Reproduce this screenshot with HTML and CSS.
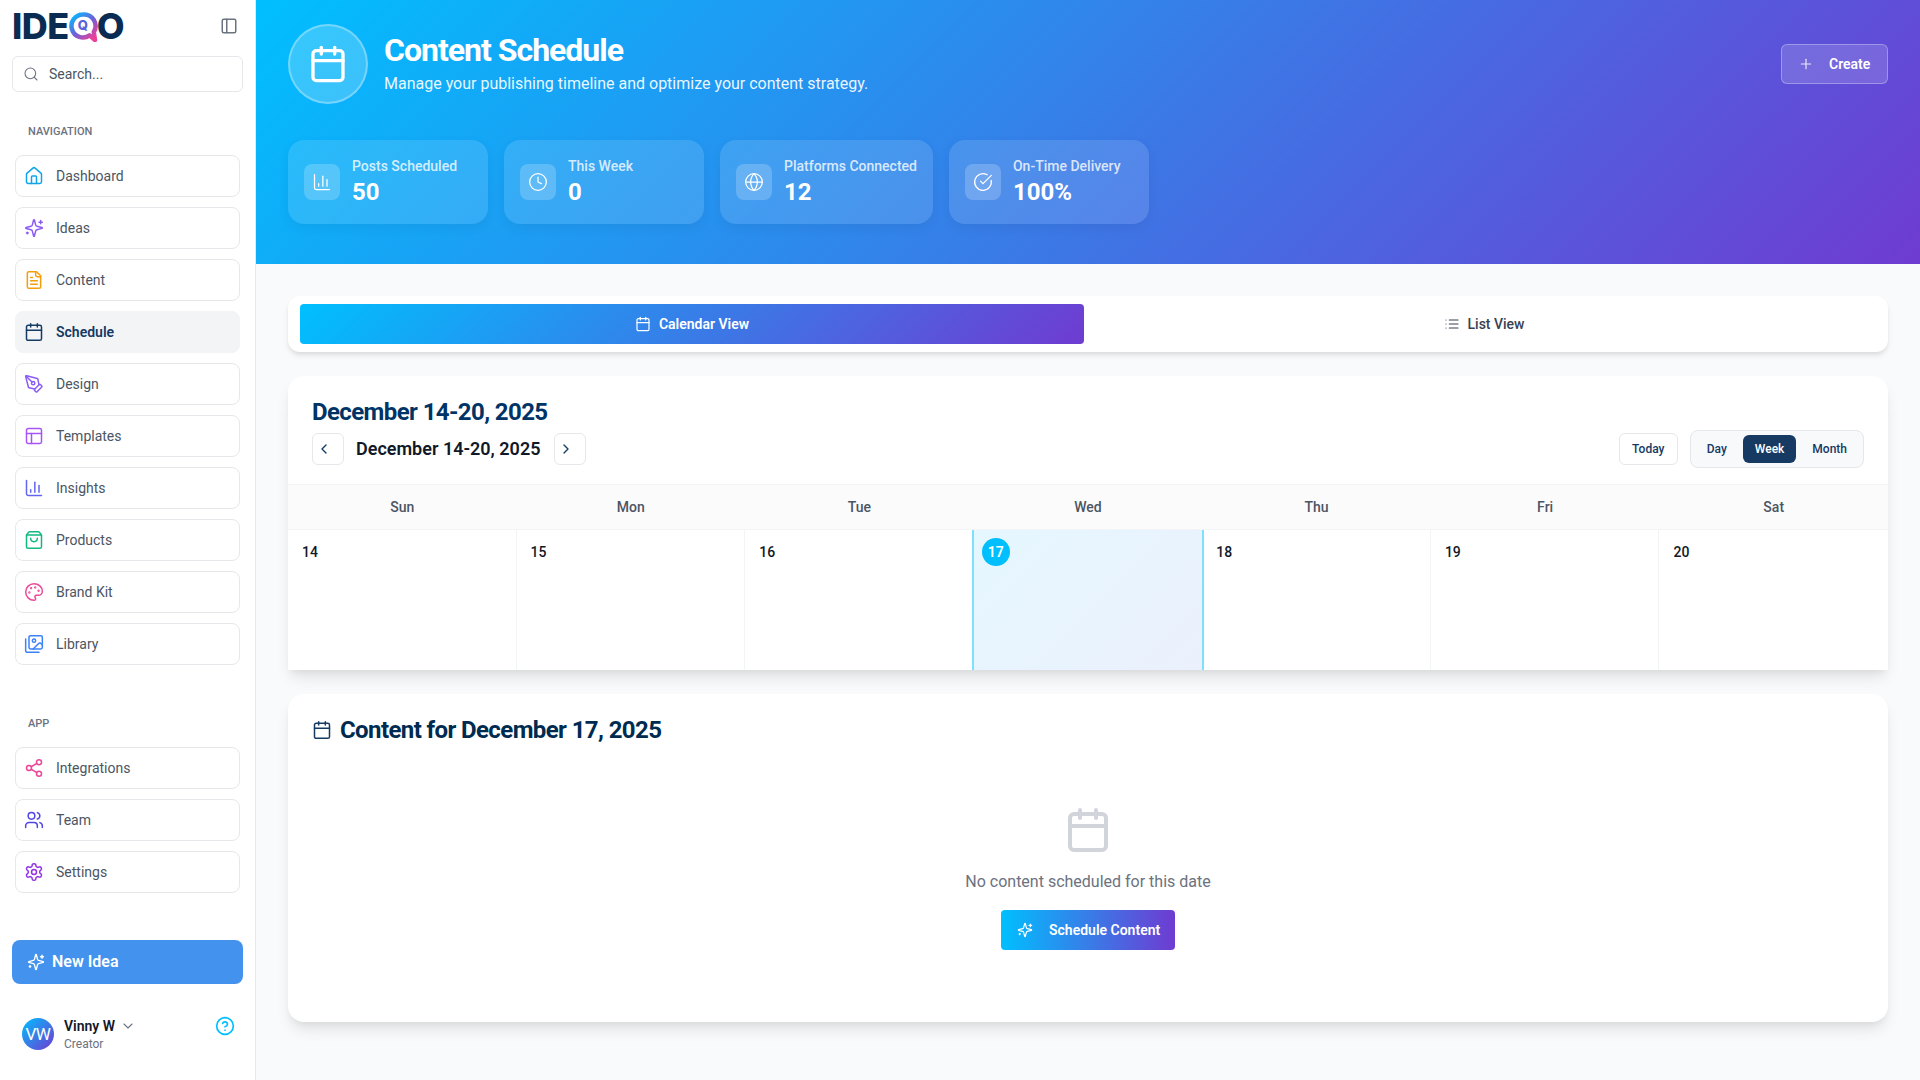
FILE: index.html
```html
<!DOCTYPE html>
<html lang="en">
<head>
    <meta charset="UTF-8">
    <meta name="viewport" content="width=device-width, initial-scale=1.0">
    <title>Content Schedule</title>
    <link rel="stylesheet" href="styles.css">
</head>
<body>
    <!-- icon sprite -->
    <svg class="sprite" xmlns="http://www.w3.org/2000/svg">
        <symbol id="i-panel" viewBox="0 0 24 24"><rect x="3" y="3" width="18" height="18" rx="2"/><path d="M9 3v18"/></symbol>
        <symbol id="i-search" viewBox="0 0 24 24"><circle cx="11" cy="11" r="8"/><path d="m21 21-4.3-4.3"/></symbol>
        <symbol id="i-home" viewBox="0 0 24 24"><path d="M15 21v-8a1 1 0 0 0-1-1h-4a1 1 0 0 0-1 1v8"/><path d="M3 10a2 2 0 0 1 .709-1.528l7-5.999a2 2 0 0 1 2.582 0l7 5.999A2 2 0 0 1 21 10v9a2 2 0 0 1-2 2H5a2 2 0 0 1-2-2z"/></symbol>
        <symbol id="i-sparkles" viewBox="0 0 24 24"><path d="M9.937 15.5A2 2 0 0 0 8.5 14.063l-6.135-1.582a.5.5 0 0 1 0-.962L8.5 9.936A2 2 0 0 0 9.937 8.5l1.582-6.135a.5.5 0 0 1 .963 0L14.063 8.5A2 2 0 0 0 15.5 9.937l6.135 1.581a.5.5 0 0 1 0 .964L15.5 14.063a2 2 0 0 0-1.437 1.437l-1.582 6.135a.5.5 0 0 1-.963 0z"/><path d="M20 3v4"/><path d="M22 5h-4"/><path d="M4 17v2"/><path d="M5 18H3"/></symbol>
        <symbol id="i-file" viewBox="0 0 24 24"><path d="M15 2H6a2 2 0 0 0-2 2v16a2 2 0 0 0 2 2h12a2 2 0 0 0 2-2V7Z"/><path d="M14 2v4a2 2 0 0 0 2 2h4"/><path d="M10 9H8"/><path d="M16 13H8"/><path d="M16 17H8"/></symbol>
        <symbol id="i-calendar" viewBox="0 0 24 24"><path d="M8 2v4"/><path d="M16 2v4"/><rect x="3" y="4" width="18" height="18" rx="2"/><path d="M3 10h18"/></symbol>
        <symbol id="i-pen" viewBox="0 0 24 24"><path d="M15.707 21.293a1 1 0 0 1-1.414 0l-1.586-1.586a1 1 0 0 1 0-1.414l5.586-5.586a1 1 0 0 1 1.414 0l1.586 1.586a1 1 0 0 1 0 1.414z"/><path d="m18 13-1.375-6.874a1 1 0 0 0-.746-.776L3.235 2.028a1 1 0 0 0-1.207 1.207L5.35 15.879a1 1 0 0 0 .776.746L13 18"/><path d="m2.3 2.3 7.286 7.286"/><circle cx="11" cy="11" r="2"/></symbol>
        <symbol id="i-layout" viewBox="0 0 24 24"><rect x="3" y="3" width="18" height="18" rx="2"/><path d="M3 9h18"/><path d="M9 21V9"/></symbol>
        <symbol id="i-chart" viewBox="0 0 24 24"><path d="M3 3v16a2 2 0 0 0 2 2h16"/><path d="M18 17V9"/><path d="M13 17V5"/><path d="M8 17v-3"/></symbol>
        <symbol id="i-bag" viewBox="0 0 24 24"><path d="M16 10a4 4 0 0 1-8 0"/><path d="M3.103 6.034h17.794"/><path d="M3.4 5.467a2 2 0 0 0-.4 1.2V20a2 2 0 0 0 2 2h14a2 2 0 0 0 2-2V6.667a2 2 0 0 0-.4-1.2l-2-2.667A2 2 0 0 0 17 2H7a2 2 0 0 0-1.6.8z"/></symbol>
        <symbol id="i-palette" viewBox="0 0 24 24"><path d="M12 22a1 1 0 0 1 0-20 10 9 0 0 1 10 9 5 5 0 0 1-5 5h-2.25a1.75 1.75 0 0 0-1.4 2.8l.3.4a1.75 1.75 0 0 1-1.4 2.8z"/><circle cx="13.5" cy="6.5" r=".5" fill="currentColor"/><circle cx="17.5" cy="10.5" r=".5" fill="currentColor"/><circle cx="6.5" cy="12.5" r=".5" fill="currentColor"/><circle cx="8.5" cy="7.5" r=".5" fill="currentColor"/></symbol>
        <symbol id="i-images" viewBox="0 0 24 24"><path d="M18 22H4a2 2 0 0 1-2-2V6"/><path d="m22 13-1.296-1.296a2.41 2.41 0 0 0-3.408 0L11 18"/><circle cx="12" cy="8" r="2"/><rect x="6" y="2" width="16" height="16" rx="2"/></symbol>
        <symbol id="i-share" viewBox="0 0 24 24"><circle cx="18" cy="5" r="3"/><circle cx="6" cy="12" r="3"/><circle cx="18" cy="19" r="3"/><path d="m8.59 13.51 6.83 3.98"/><path d="m15.41 6.51-6.82 3.98"/></symbol>
        <symbol id="i-users" viewBox="0 0 24 24"><path d="M16 21v-2a4 4 0 0 0-4-4H6a4 4 0 0 0-4 4v2"/><circle cx="9" cy="7" r="4"/><path d="M22 21v-2a4 4 0 0 0-3-3.87"/><path d="M16 3.13a4 4 0 0 1 0 7.75"/></symbol>
        <symbol id="i-gear" viewBox="0 0 24 24"><path d="M12.22 2h-.44a2 2 0 0 0-2 2v.18a2 2 0 0 1-1 1.73l-.43.25a2 2 0 0 1-2 0l-.15-.08a2 2 0 0 0-2.73.73l-.22.38a2 2 0 0 0 .73 2.73l.15.1a2 2 0 0 1 1 1.72v.51a2 2 0 0 1-1 1.74l-.15.09a2 2 0 0 0-.73 2.73l.22.38a2 2 0 0 0 2.73.73l.15-.08a2 2 0 0 1 2 0l.43.25a2 2 0 0 1 1 1.73V20a2 2 0 0 0 2 2h.44a2 2 0 0 0 2-2v-.18a2 2 0 0 1 1-1.73l.43-.25a2 2 0 0 1 2 0l.15.08a2 2 0 0 0 2.73-.73l.22-.39a2 2 0 0 0-.73-2.73l-.15-.08a2 2 0 0 1-1-1.74v-.5a2 2 0 0 1 1-1.74l.15-.09a2 2 0 0 0 .73-2.73l-.22-.38a2 2 0 0 0-2.73-.73l-.15.08a2 2 0 0 1-2 0l-.43-.25a2 2 0 0 1-1-1.73V4a2 2 0 0 0-2-2z"/><circle cx="12" cy="12" r="3"/></symbol>
        <symbol id="i-help" viewBox="0 0 24 24"><circle cx="12" cy="12" r="10"/><path d="M9.09 9a3 3 0 0 1 5.83 1c0 2-3 3-3 3"/><path d="M12 17h.01"/></symbol>
        <symbol id="i-down" viewBox="0 0 24 24"><path d="m6 9 6 6 6-6"/></symbol>
        <symbol id="i-left" viewBox="0 0 24 24"><path d="m15 18-6-6 6-6"/></symbol>
        <symbol id="i-right" viewBox="0 0 24 24"><path d="m9 18 6-6-6-6"/></symbol>
        <symbol id="i-plus" viewBox="0 0 24 24"><path d="M5 12h14"/><path d="M12 5v14"/></symbol>
        <symbol id="i-clock" viewBox="0 0 24 24"><circle cx="12" cy="12" r="10"/><path d="M12 6v6l4 2"/></symbol>
        <symbol id="i-globe" viewBox="0 0 24 24"><circle cx="12" cy="12" r="10"/><path d="M12 2a14.5 14.5 0 0 0 0 20 14.5 14.5 0 0 0 0-20"/><path d="M2 12h20"/></symbol>
        <symbol id="i-check" viewBox="0 0 24 24"><path d="M21.801 10A10 10 0 1 1 17 3.335"/><path d="m9 11 3 3L22 4"/></symbol>
        <symbol id="i-list" viewBox="0 0 24 24"><path d="M3 12h.01"/><path d="M3 18h.01"/><path d="M3 6h.01"/><path d="M8 12h13"/><path d="M8 18h13"/><path d="M8 6h13"/></symbol>
    </svg>

    <div class="app">
        <aside class="sidebar">
            <div class="brand">
                <div class="logo">
                    <span>IDE</span>
                    <span class="logo-q">
                        <svg class="logo-ring" viewBox="0 0 30 30" fill="none">
                            <defs>
                                <linearGradient id="ringGrad" x1="0" y1="0" x2="0.8" y2="1">
                                    <stop offset="0" stop-color="#00bfff"/>
                                    <stop offset="0.55" stop-color="#6f5fd8"/>
                                    <stop offset="1" stop-color="#ec3f9a"/>
                                </linearGradient>
                            </defs>
                            <path d="M14 2.5a11.5 11.5 0 1 0 6.6 20.9l5.4 4.6-1.2-8A11.5 11.5 0 0 0 14 2.5z" stroke="url(#ringGrad)" stroke-width="4.5" stroke-linejoin="round"/>
                        </svg>
                        <span class="logo-q-inner">Q</span>
                    </span>
                    <span>O</span>
                </div>
                <svg class="icon toggle"><use href="#i-panel"/></svg>
            </div>

            <div class="search">
                <svg class="icon search-icon"><use href="#i-search"/></svg>
                <span>Search...</span>
            </div>

            <div class="nav-title">Navigation</div>
            <nav class="nav">
                <a class="nav-item"><svg class="icon c-sky"><use href="#i-home"/></svg>Dashboard</a>
                <a class="nav-item"><svg class="icon c-violet"><use href="#i-sparkles"/></svg>Ideas</a>
                <a class="nav-item"><svg class="icon c-amber"><use href="#i-file"/></svg>Content</a>
                <a class="nav-item active"><svg class="icon"><use href="#i-calendar"/></svg>Schedule</a>
                <a class="nav-item"><svg class="icon c-violet"><use href="#i-pen"/></svg>Design</a>
                <a class="nav-item"><svg class="icon c-purple"><use href="#i-layout"/></svg>Templates</a>
                <a class="nav-item"><svg class="icon c-indigo"><use href="#i-chart"/></svg>Insights</a>
                <a class="nav-item"><svg class="icon c-green"><use href="#i-bag"/></svg>Products</a>
                <a class="nav-item"><svg class="icon c-pink"><use href="#i-palette"/></svg>Brand Kit</a>
                <a class="nav-item"><svg class="icon c-blue"><use href="#i-images"/></svg>Library</a>
            </nav>

            <div class="nav-title app-title">App</div>
            <nav class="nav">
                <a class="nav-item"><svg class="icon c-pink"><use href="#i-share"/></svg>Integrations</a>
                <a class="nav-item"><svg class="icon c-deep"><use href="#i-users"/></svg>Team</a>
                <a class="nav-item"><svg class="icon c-grape"><use href="#i-gear"/></svg>Settings</a>
            </nav>

            <button class="new-idea"><svg class="icon"><use href="#i-sparkles"/></svg>New Idea</button>

            <div class="user">
                <div class="avatar">VW</div>
                <div class="user-info">
                    <div class="user-name">Vinny W <svg class="icon"><use href="#i-down"/></svg></div>
                    <div class="user-role">Creator</div>
                </div>
                <svg class="icon help"><use href="#i-help"/></svg>
            </div>
        </aside>

        <main class="main">
            <header class="hero">
                <div class="hero-top">
                    <div class="hero-circle"><svg class="icon"><use href="#i-calendar"/></svg></div>
                    <div class="hero-text">
                        <h1>Content Schedule</h1>
                        <p>Manage your publishing timeline and optimize your content strategy.</p>
                    </div>
                    <button class="create"><svg class="icon"><use href="#i-plus"/></svg>Create</button>
                </div>
                <div class="stats">
                    <div class="stat">
                        <div class="stat-icon"><svg class="icon"><use href="#i-chart"/></svg></div>
                        <div><div class="stat-label">Posts Scheduled</div><div class="stat-value">50</div></div>
                    </div>
                    <div class="stat">
                        <div class="stat-icon"><svg class="icon"><use href="#i-clock"/></svg></div>
                        <div><div class="stat-label">This Week</div><div class="stat-value">0</div></div>
                    </div>
                    <div class="stat">
                        <div class="stat-icon"><svg class="icon"><use href="#i-globe"/></svg></div>
                        <div><div class="stat-label">Platforms Connected</div><div class="stat-value">12</div></div>
                    </div>
                    <div class="stat">
                        <div class="stat-icon"><svg class="icon"><use href="#i-check"/></svg></div>
                        <div><div class="stat-label">On-Time Delivery</div><div class="stat-value">100%</div></div>
                    </div>
                </div>
            </header>

            <div class="content">
                <div class="tabs">
                    <button class="tab active"><svg class="icon"><use href="#i-calendar"/></svg>Calendar View</button>
                    <button class="tab"><svg class="icon"><use href="#i-list"/></svg>List View</button>
                </div>

                <section class="card calendar">
                    <div class="cal-head">
                        <div>
                            <h2 class="cal-title">December 14-20, 2025</h2>
                            <div class="cal-nav">
                                <button class="nav-btn"><svg class="icon"><use href="#i-left"/></svg></button>
                                <span class="cal-range">December 14-20, 2025</span>
                                <button class="nav-btn"><svg class="icon"><use href="#i-right"/></svg></button>
                            </div>
                        </div>
                        <div class="cal-controls">
                            <button class="today">Today</button>
                            <div class="segment">
                                <button>Day</button>
                                <button class="active">Week</button>
                                <button>Month</button>
                            </div>
                        </div>
                    </div>
                    <div class="week-head">
                        <div>Sun</div><div>Mon</div><div>Tue</div><div>Wed</div><div>Thu</div><div>Fri</div><div>Sat</div>
                    </div>
                    <div class="week">
                        <div class="day"><span class="num">14</span></div>
                        <div class="day"><span class="num">15</span></div>
                        <div class="day"><span class="num">16</span></div>
                        <div class="day today-cell"><span class="num">17</span></div>
                        <div class="day"><span class="num">18</span></div>
                        <div class="day"><span class="num">19</span></div>
                        <div class="day"><span class="num">20</span></div>
                    </div>
                </section>

                <section class="card day-content">
                    <h2 class="day-title"><svg class="icon"><use href="#i-calendar"/></svg>Content for December 17, 2025</h2>
                    <div class="empty">
                        <svg class="icon empty-icon"><use href="#i-calendar"/></svg>
                        <p>No content scheduled for this date</p>
                        <button class="schedule-btn"><svg class="icon"><use href="#i-sparkles"/></svg>Schedule Content</button>
                    </div>
                </section>
            </div>
        </main>
    </div>
</body>
</html>
```

FILE: styles.css
```css
* { margin: 0; padding: 0; box-sizing: border-box; }
body { font-family: Roboto, "Liberation Sans", sans-serif; background: #f9fafb; color: #111827; font-size: 14px; }
button { font-family: inherit; border: none; background: none; cursor: pointer; }
.sprite { display: none; }
.icon { width: 20px; height: 20px; fill: none; stroke: currentColor; stroke-width: 2; stroke-linecap: round; stroke-linejoin: round; flex-shrink: 0; }

.app { display: flex; height: 1080px; overflow: hidden; }

/* sidebar */
.sidebar { width: 256px; flex-shrink: 0; background: #fff; border-right: 1px solid #e5e7eb; padding: 12px; display: flex; flex-direction: column; }
.brand { height: 28px; display: flex; align-items: center; justify-content: space-between; }
.logo { display: flex; align-items: center; font-family: Inter, sans-serif; font-weight: 800; font-size: 36px; line-height: 28px; color: #0a2c52; letter-spacing: -0.5px; }
.logo-q { width: 28px; height: 28px; margin-left: 0; position: relative; display: flex; align-items: center; justify-content: center; }
.logo-ring { position: absolute; left: 0; top: 0; width: 30px; height: 30px; }
.logo-q-inner { font-size: 13px; line-height: 13px; color: #5a63dc; letter-spacing: 0; position: relative; top: -1px; }
.toggle { width: 18px; height: 18px; color: #6b7280; margin-right: 5px; }
.search { height: 36px; margin-top: 16px; border: 1px solid #e5e7eb; border-radius: 6px; display: flex; align-items: center; padding: 0 10px; gap: 10px; color: #4b5563; font-size: 14px; }
.search-icon { width: 16px; height: 16px; color: #6b7280; stroke-width: 1.6; }
.nav-title { margin: 32px 16px 15px; height: 16px; line-height: 16px; font-size: 11px; font-weight: 500; text-transform: uppercase; color: #6b7280; }
.app-title { margin-top: 51px; }
.nav { display: flex; flex-direction: column; gap: 10px; padding: 0 3px; }
.nav-item { height: 42px; border: 1px solid #e5e7eb; border-radius: 8px; display: flex; align-items: center; padding: 0 8px; gap: 12px; color: #4b5563; font-size: 14px; }
.nav-item .icon { width: 20px; height: 20px; stroke-width: 1.8; }
.nav-item.active { background: #f3f4f6; border-color: #f3f4f6; color: #153a63; font-weight: 600; }
.c-sky { color: #0ea5e9; }
.c-violet { color: #8b5cf6; }
.c-amber { color: #f59e0b; }
.c-purple { color: #a855f7; }
.c-indigo { color: #6366f1; }
.c-green { color: #10b981; }
.c-pink { color: #ec4899; }
.c-blue { color: #3b82f6; }
.c-deep { color: #4f46e5; }
.c-grape { color: #9333ea; }
.new-idea { margin-top: 47px; height: 44px; padding: 0 15px 1px; border-radius: 8px; background: #4392ed; color: #fff; font-size: 16px; font-weight: 600; display: flex; align-items: center; gap: 7px; }
.new-idea .icon { width: 18px; height: 18px; stroke-width: 1.8; }
.user { margin-top: 34px; padding: 0 10px; display: flex; align-items: flex-start; position: relative; }
.avatar { width: 32px; height: 32px; border-radius: 50%; background: linear-gradient(135deg, #00bfff, #6f3bd1); color: #fff; font-size: 17px; letter-spacing: -0.5px; display: flex; align-items: center; justify-content: center; }
.user-info { margin-left: 10px; }
.user-name { font-size: 14px; line-height: 16px; font-weight: 600; display: flex; align-items: center; gap: 5px; color: #111827; }
.user-name .icon { width: 16px; height: 16px; stroke-width: 1.6; color: #6b7280; }
.user-role { font-size: 12px; line-height: 14px; margin-top: 3px; color: #6b7280; }
.help { position: absolute; right: 8px; top: -2px; color: #00bfff; }

/* main */
.main { flex: 1; min-width: 0; }
.hero { height: 264px; padding: 24px 32px; background: linear-gradient(135deg, #00bfff, #6f3bd1); color: #fff; }
.hero-top { display: flex; align-items: center; gap: 16px; }
.hero-circle { width: 80px; height: 80px; border-radius: 50%; background: rgba(255, 255, 255, .2); border: 2px solid rgba(255, 255, 255, .3); display: flex; align-items: center; justify-content: center; }
.hero-circle .icon { width: 40px; height: 40px; }
.hero-text { flex: 1; }
.hero-text h1 { font-size: 32px; line-height: 40px; font-weight: 700; letter-spacing: -1px; margin-top: -2px; margin-bottom: 2px; }
.hero-text p { font-size: 16px; line-height: 24px; color: rgba(255, 255, 255, .92); }
.create { height: 40px; width: 107px; border: 1px solid rgba(255, 255, 255, .3); border-radius: 6px; background: rgba(255, 255, 255, .15); color: #fff; font-size: 14px; font-weight: 600; display: flex; align-items: center; padding: 0 16px; gap: 15px; }
.create .icon { width: 16px; height: 16px; stroke-width: 1.8; opacity: .85; }
.stats { display: flex; gap: 16px; margin-top: 36px; }
.stat { min-width: 200px; height: 84px; padding: 16px; border-radius: 16px; background: rgba(255, 255, 255, .12); box-shadow: 0 4px 12px rgba(0, 0, 0, .06); display: flex; align-items: center; gap: 12px; }
.stat-icon { width: 36px; height: 36px; border-radius: 8px; background: rgba(255, 255, 255, .2); display: flex; align-items: center; justify-content: center; }
.stat-icon .icon { stroke-width: 1.5; }
.stat-label { font-size: 14px; line-height: 20px; font-weight: 500; color: rgba(255, 255, 255, .8); }
.stat-value { font-size: 24px; line-height: 32px; font-weight: 700; }

.content { padding: 32px; display: flex; flex-direction: column; gap: 24px; }
.tabs { height: 56px; padding: 8px 12px; background: #fff; border-radius: 12px; box-shadow: 0 4px 6px -1px rgba(0, 0, 0, .1), 0 2px 4px -1px rgba(0, 0, 0, .06); display: grid; grid-template-columns: 1fr 1fr; gap: 8px; }
.tab { height: 40px; border-radius: 4px; font-size: 14px; font-weight: 500; color: #374151; display: flex; align-items: center; justify-content: center; gap: 8px; }
.tab .icon { width: 16px; height: 16px; stroke-width: 1.8; }
.tab.active { background: linear-gradient(135deg, #00bfff, #6f3bd1); color: #fff; font-weight: 600; }

.card { background: #fff; border-radius: 16px; box-shadow: 0 10px 15px -3px rgba(0, 0, 0, .1), 0 4px 6px -2px rgba(0, 0, 0, .05); }
.calendar { border-radius: 16px 16px 0 0; }
.cal-head { display: flex; justify-content: space-between; align-items: flex-end; padding: 20px 24px 16px; }
.cal-title { font-size: 24px; line-height: 32px; font-weight: 700; letter-spacing: -.6px; color: #003366; margin-bottom: 5px; }
.cal-nav { display: flex; align-items: center; margin-bottom: 3px; }
.nav-btn { width: 32px; height: 32px; padding-right: 8px; border: 1px solid #e5e7eb; border-radius: 6px; color: #153a63; display: flex; align-items: center; justify-content: center; }
.nav-btn .icon { width: 16px; height: 16px; }
.cal-range { font-size: 18px; font-weight: 600; color: #111827; margin: 0 14px 2px 12px; }
.cal-controls { display: flex; align-items: center; gap: 12px; }
.today { width: 59px; height: 32px; border: 1px solid #e5e7eb; border-radius: 6px; font-size: 12px; font-weight: 500; color: #153a63; background: #fff; }
.segment { height: 38px; padding: 4px; gap: 4px; border: 1px solid #e5e7eb; border-radius: 8px; background: #f8f9fb; display: flex; }
.segment button { height: 28px; padding: 0 12px; border-radius: 6px; font-size: 12px; font-weight: 500; color: #153a63; }
.segment button.active { background: #173a63; color: #fff; }

.week-head { height: 46px; display: grid; grid-template-columns: repeat(7, 1fr); border-top: 1px solid #f3f4f6; border-bottom: 1px solid #f3f4f6; background: #fbfbfc; }
.week-head div { display: flex; align-items: center; justify-content: center; font-size: 14px; font-weight: 500; color: #4b5563; padding-bottom: 1px; }
.week { height: 140px; display: grid; grid-template-columns: repeat(7, 1fr); }
.day { padding: 8px; border-right: 1px solid #f3f4f6; }
.day:last-child { border-right: none; }
.num { width: 28px; height: 28px; border-radius: 50%; display: flex; align-items: center; justify-content: center; font-size: 14px; font-weight: 500; color: #111827; }
.today-cell { margin-left: -2px; margin-right: -2px; border-left: 2px solid #7fdfff; border-right: 2px solid #7fdfff; background: linear-gradient(135deg, #e5f7ff, #ebf0fc); }
.today-cell .num { background: #00bfff; color: #fff; font-weight: 600; }

.day-content { height: 328px; padding: 24px; }
.day-title { display: flex; align-items: center; gap: 8px; font-size: 24px; line-height: 24px; font-weight: 700; letter-spacing: -.6px; color: #002b50; }
.day-title .icon { stroke-width: 1.8; color: #153a63; }
.empty { margin-top: 64px; display: flex; flex-direction: column; align-items: center; }
.empty-icon { width: 48px; height: 48px; color: #d1d5db; }
.empty p { margin-top: 16px; font-size: 16px; line-height: 24px; color: #6b7280; }
.schedule-btn { margin-top: 16px; height: 40px; width: 174px; white-space: nowrap; border-radius: 4px; background: linear-gradient(90deg, #00bfff, #6f3bd1); color: #fff; font-size: 14px; font-weight: 600; display: flex; align-items: center; padding: 0 16px; gap: 16px; }
.schedule-btn .icon { width: 16px; height: 16px; stroke-width: 1.8; }
```
